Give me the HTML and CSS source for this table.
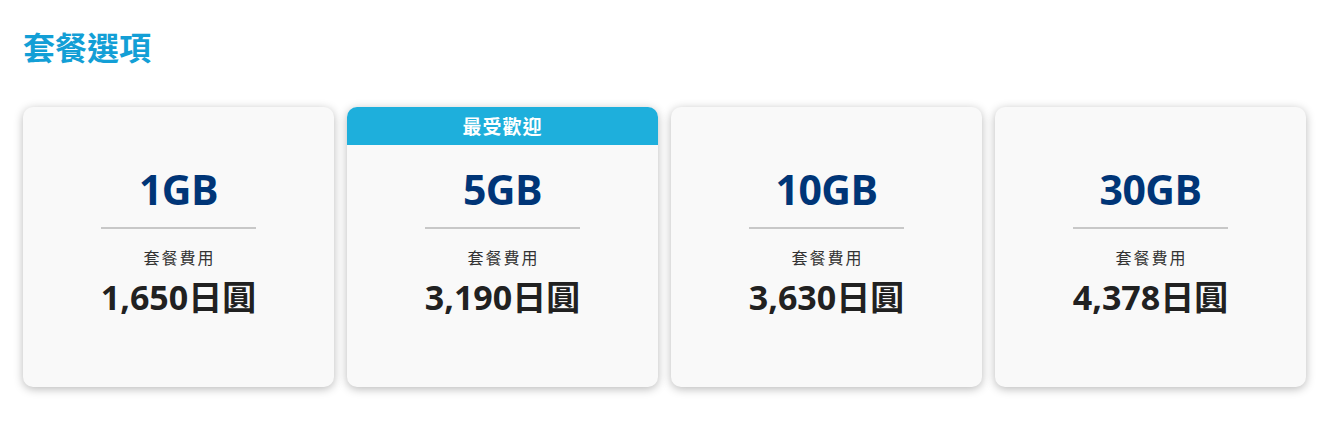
FILE: index.html
```html
<!DOCTYPE html>
<html lang="zh-Hant">
<head>
<meta charset="utf-8">
<title>套餐選項</title>
<link rel="stylesheet" href="styles.css">
</head>
<body>
<section class="plans">
  <h2 class="plans-title">套餐選項</h2>
  <div class="plan-grid">
    <div class="plan-card">
      <div class="plan-name">1GB</div>
      <div class="plan-divider"></div>
      <div class="plan-label">套餐費用</div>
      <div class="plan-price">1,650日圓</div>
    </div>
    <div class="plan-card popular">
      <div class="plan-badge">最受歡迎</div>
      <div class="plan-name">5GB</div>
      <div class="plan-divider"></div>
      <div class="plan-label">套餐費用</div>
      <div class="plan-price">3,190日圓</div>
    </div>
    <div class="plan-card">
      <div class="plan-name">10GB</div>
      <div class="plan-divider"></div>
      <div class="plan-label">套餐費用</div>
      <div class="plan-price">3,630日圓</div>
    </div>
    <div class="plan-card">
      <div class="plan-name">30GB</div>
      <div class="plan-divider"></div>
      <div class="plan-label">套餐費用</div>
      <div class="plan-price">4,378日圓</div>
    </div>
  </div>
</section>
</body>
</html>
```
FILE: styles.css
```css
* { box-sizing: border-box; }
body {
  margin: 0;
  background: #ffffff;
  font-family: "Open Sans", "Noto Sans CJK TC", sans-serif;
}
.plans {
  padding: 22px 23px 30px 23px;
}
.plans-title {
  margin: 0;
  font-size: 32px;
  line-height: 48px;
  font-weight: 700;
  color: #139fd6;
  font-family: "Noto Sans CJK TC", sans-serif;
}
.plan-grid {
  margin-top: 37px;
  display: grid;
  grid-template-columns: repeat(4, 1fr);
  gap: 13px;
}
.plan-card {
  position: relative;
  height: 280px;
  background: #f9f9f9;
  border-radius: 10px;
  box-shadow: 0 2px 10px rgba(0, 0, 0, 0.28);
  display: flex;
  flex-direction: column;
  align-items: center;
  padding-top: 57px;
  overflow: hidden;
}
.plan-badge {
  position: absolute;
  top: 0;
  left: 0;
  right: 0;
  height: 38px;
  background: #1eafdc;
  color: #ffffff;
  font-size: 19px;
  font-weight: 700;
  line-height: 38px;
  letter-spacing: 1px;
  text-align: center;
  font-family: "Noto Sans CJK TC", sans-serif;
}
.plan-name {
  font-size: 41px;
  line-height: 50px;
  font-weight: 700;
  color: #003577;
  letter-spacing: -0.5px;
}
.plan-divider {
  width: 50%;
  height: 2px;
  background: #c8c8c8;
  margin-top: 13px;
}
.plan-label {
  margin-top: 16px;
  font-size: 16px;
  line-height: 24px;
  color: #333333;
  letter-spacing: 2px;
  padding-left: 2px;
  font-family: "Noto Sans CJK TC", sans-serif;
}
.plan-price {
  margin-top: 5px;
  font-size: 34px;
  line-height: 46px;
  font-weight: 700;
  color: #212121;
}
```
